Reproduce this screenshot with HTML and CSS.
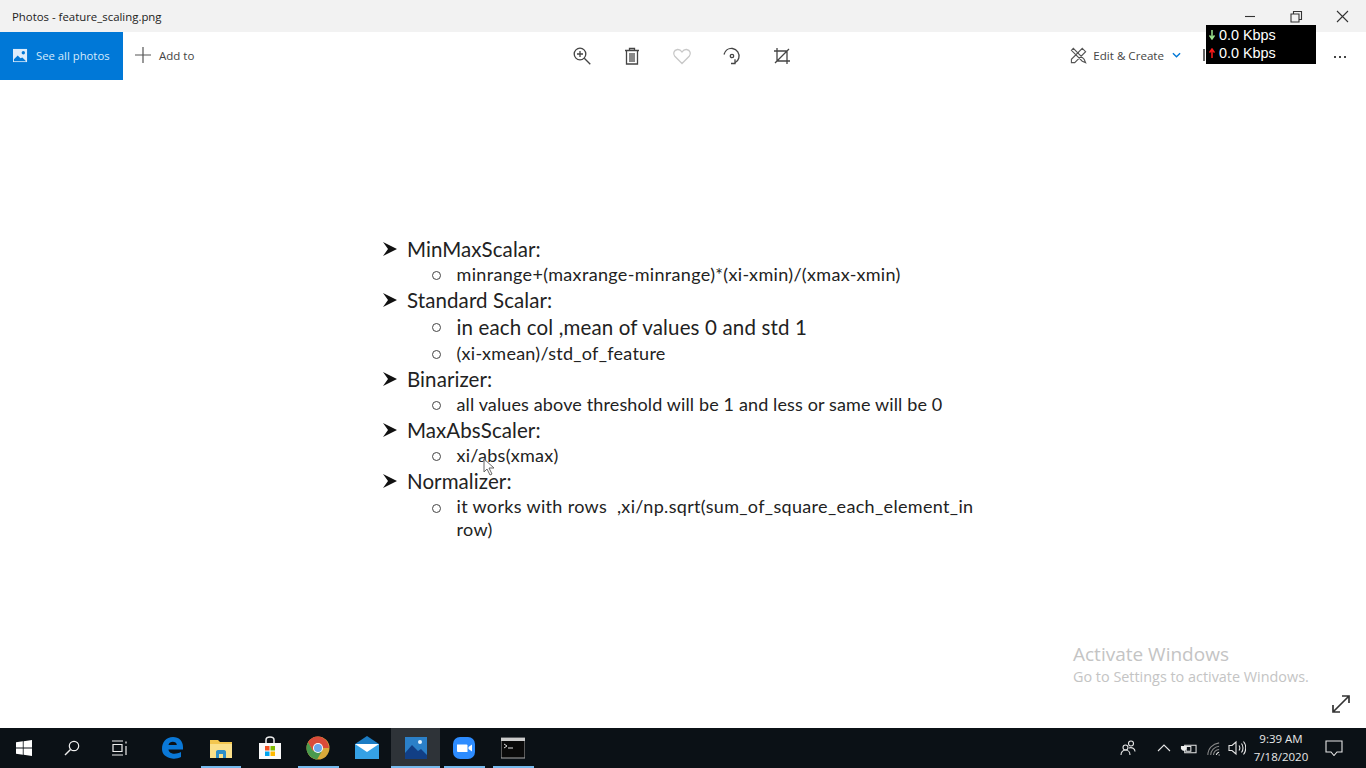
FILE: index.html
```html
<!DOCTYPE html>
<html lang="en">
<head>
<meta charset="utf-8">
<title>Photos - feature_scaling.png</title>
<link rel="stylesheet" href="styles.css">
</head>
<body>
<div class="screen">
  <header class="titlebar">
    <span class="title">Photos - feature_scaling.png</span>
    <div class="winctl">
      <svg class="wbtn" viewBox="0 0 46 32"><path d="M18 16.5h10" class="s1"/></svg>
      <svg class="wbtn" viewBox="0 0 46 32"><path d="M18 14h8v8h-8zM20.500 14v-2.500h8v8H26" class="s1"/></svg>
      <svg class="wbtn" viewBox="0 0 46 32"><path d="M18 11l11 11M29 11L18 22" class="s1"/></svg>
    </div>
  </header>

  <nav class="toolbar">
    <div class="seeall">
      <svg class="seeall-ico" viewBox="0 0 16 16"><path d="M0 1h15v14H0z" fill="#dcecfb"/><path d="M1 12l4-4 3 3 2-1 4 4H1z" fill="#0078d7"/><circle cx="11" cy="5" r="1.800" fill="#0078d7"/></svg>
      <span>See all photos</span>
    </div>
    <div class="addto">
      <svg class="plus" viewBox="0 0 16 16"><path d="M8 0v16M0 8h16" stroke="#555" stroke-width="1.200" fill="none"/></svg>
      <span>Add to</span>
    </div>
    <div class="tools">
      <svg class="tool" viewBox="0 0 20 20"><circle cx="8" cy="8" r="5.800" class="t"/><path d="M5 8h6M8 5v6" class="t"/><path d="M12.300 12.300l6 6" class="t"/></svg>
      <svg class="tool" viewBox="0 0 20 20"><path d="M3 4.500h14M7.500 4.500V2.500h5v2M4.500 4.500v13.500h11V4.500z" class="t"/><path d="M7 7h6v9H7z" fill="#888"/></svg>
      <svg class="tool" viewBox="0 0 20 20"><path d="M10 17.500L2.800 10.200C.8 8 1.500 4 5.500 3.500 7.500 3.300 9 4.500 10 6c1-1.500 2.500-2.700 4.500-2.500 4 .5 4.700 4.500 2.700 6.700z" fill="none" stroke="#c8c8c8" stroke-width="1.300"/></svg>
      <svg class="tool" viewBox="0 0 20 20"><path d="M2 8.500C3 4.500 6.500 2 10.500 2.500c4.500.6 7.500 5 6.300 9.500-.6 2.400-2 3.800-3.800 4.800" class="t"/><path d="M13 13.300v4.200H9" class="t"/><circle cx="10" cy="10" r="1.700" class="t"/></svg>
      <svg class="tool" viewBox="0 0 20 20"><path d="M5 2v13h13M2 5h13v13M3 17L17 3" class="t"/></svg>
    </div>
    <div class="edit">
      <svg class="edit-ico" viewBox="0 0 18 18"><path d="M1.500 3.500l2-2L15 13l1.500 3.500L13 15zM13 1.500l3.500 3.500L5 16.500H1.500V13z" fill="none" stroke="#555" stroke-width="1.200"/></svg>
      <span>Edit &amp; Create</span>
      <svg class="chev" viewBox="0 0 10 6"><path d="M1 1l4 4 4-4" fill="none" stroke="#0078d7" stroke-width="1.500"/></svg>
      <span class="clipped"></span>
    </div>
    <div class="more"><i></i><i></i><i></i></div>
  </nav>

  <main class="doc">
    <ul class="notes">
      <li class="row h1"><svg class="arrow" viewBox="0 0 14 14"><path d="M0 0l14 7-14 7 5-7z" fill="#111"/></svg><span>MinMaxScalar:</span></li>
      <li class="row r25"><span class="dot"></span><span>minrange+(maxrange-minrange)*(xi-xmin)/(xmax-xmin)</span></li>
      <li class="row h2"><svg class="arrow" viewBox="0 0 14 14"><path d="M0 0l14 7-14 7 5-7z" fill="#111"/></svg><span>Standard Scalar:</span></li>
      <li class="row big"><span class="dot"></span><span>in each col ,mean of values 0 and std 1</span></li>
      <li class="row r26"><span class="dot"></span><span>(xi-xmean)/std_of_feature</span></li>
      <li class="row h1"><svg class="arrow" viewBox="0 0 14 14"><path d="M0 0l14 7-14 7 5-7z" fill="#111"/></svg><span>Binarizer:</span></li>
      <li class="row r26 tight"><span class="dot"></span><span>all values above threshold will be 1 and less or same will be 0</span></li>
      <li class="row h1"><svg class="arrow" viewBox="0 0 14 14"><path d="M0 0l14 7-14 7 5-7z" fill="#111"/></svg><span>MaxAbsScaler:</span></li>
      <li class="row r26"><span class="dot"></span><span>xi/abs(xmax)</span></li>
      <li class="row h1"><svg class="arrow" viewBox="0 0 14 14"><path d="M0 0l14 7-14 7 5-7z" fill="#111"/></svg><span>Normalizer:</span></li>
      <li class="row wrap"><span class="dot"></span><span class="wraptext">it works with rows &nbsp;,xi/np.sqrt(sum_of_square_each_element_in<br>row)</span></li>
    </ul>
  </main>

  <footer class="taskbar">
    <div class="sys">
      <div class="tb"><svg class="i16" viewBox="0 0 16 16"><path d="M0 2.300l6.800-1v6.300H0zM7.600 1.200L16 0v7.600H7.600zM0 8.400h6.800v6.300l-6.800-1zM7.600 8.400H16V16l-8.400-1.200z" fill="#fff"/></svg></div>
      <div class="tb"><svg class="i16" viewBox="0 0 16 16"><circle cx="10" cy="6" r="4.700" fill="none" stroke="#eee" stroke-width="1.200"/><path d="M6.500 9.500L1 15" stroke="#eee" stroke-width="1.400"/></svg></div>
      <div class="tb"><svg class="i16" viewBox="0 0 16 16"><path d="M0 1h11M0 15h11M1 4.500h9v7H1zM14 1.500v2M14 6v9" fill="none" stroke="#eee" stroke-width="1.200"/></svg></div>
    </div>
    <div class="apps">
      <div class="tb app"><svg class="i24" viewBox="0 0 24 24"><path d="M2 13C2 6 6 1 13 1c6 0 10 4 10 10v2.500H8.500c.3 4.500 7 5.500 12.500 2.500v5c-3 1.500-6 2-9 1.500C5.500 21.500 2 18 2 13zm6.500-4h8.300c0-4-7.500-4.500-8.300 0z" fill="#0a78d7"/></svg></div>
      <div class="tb app on"><svg class="i24" viewBox="0 0 24 24"><path d="M1 4h8l2 2h12v16H1z" fill="#f3c64f"/><path d="M1 8h22v14H1z" fill="#fbe08a"/><path d="M7 22v-6c0-1 .5-2 2-2h6c1.500 0 2 1 2 2v6h-3v-4h-4v4z" fill="#2f8fc9"/></svg></div>
      <div class="tb app"><svg class="i24" viewBox="0 0 24 24"><path d="M1 7h22v16H1z" fill="#fafafa"/><path d="M8 7V4c0-4 8-4 8 0v3" fill="none" stroke="#eee" stroke-width="1.500"/><path d="M7 10h4.500v4.500H7z" fill="#f25022"/><path d="M12.500 10H17v4.500h-4.500z" fill="#7fba00"/><path d="M7 15.500h4.500V20H7z" fill="#00a4ef"/><path d="M12.500 15.500H17V20h-4.500z" fill="#ffb900"/></svg></div>
      <div class="tb app on"><svg class="i24" viewBox="0 0 24 24"><circle cx="12" cy="12" r="11.500" fill="#d9a93a"/><path d="M12 .5A11.500 11.500 0 0 0 2 6.300L7 15l5-3h10.800A11.500 11.500 0 0 0 12 .5z" fill="#d94b3a"/><path d="M2 6.300a11.500 11.500 0 0 0 9 17.100L16 15l-4-3-5 3z" fill="#4a9a4e"/><circle cx="12" cy="12" r="5" fill="#fff"/><circle cx="12" cy="12" r="4" fill="#6aa5ea"/></svg></div>
      <div class="tb app"><svg class="i26" viewBox="0 0 26 24"><path d="M1 8L13 0l12 8v15H1z" fill="#1b7cc4"/><path d="M1 8h24v15H1z" fill="#35a1e5"/><path d="M1 8h24l-12 8z" fill="#fff"/></svg></div>
      <div class="tb app on active"><svg class="i24" viewBox="0 0 24 24"><path d="M1 1h22v22H1z" fill="#2b80c8"/><path d="M1 23V17l7-8 6 6 3-2 6 6v4z" fill="#123f85"/><circle cx="16" cy="6" r="2" fill="#e6f3fd"/></svg></div>
      <div class="tb app on split"><svg class="i24" viewBox="0 0 24 24"><rect x="1" y="1" width="22" height="22" rx="7" fill="#2d8cff"/><path d="M5 8.500h9.500a1 1 0 0 1 1 1V16H6a1 1 0 0 1-1-1z" fill="#fff"/><path d="M16.500 11l3.500-2.500v7L16.500 13z" fill="#fff"/></svg></div>
      <div class="tb app on"><svg class="i24" viewBox="0 0 24 24"><path d="M0 2h24v20H0z" fill="#0a0a0a" stroke="#aaa"/><path d="M0 2h24v3H0z" fill="#ccc"/><path d="M3 8l3 2-3 2M7 12h5" stroke="#ddd" fill="none"/></svg></div>
    </div>
    <div class="tray">
      <svg class="ti people" viewBox="0 0 16 16"><circle cx="11" cy="3.500" r="2.500" class="w"/><circle cx="5.500" cy="7.500" r="2.500" class="w"/><path d="M1 15c0-3 2-5 4.500-5s4.500 2 4.500 5M9 8c3-1 6 .5 6 3.500" class="w"/></svg>
      <svg class="ti chevup" viewBox="0 0 14 8"><path d="M1 7l6-6 6 6" class="w"/></svg>
      <svg class="ti batt" viewBox="0 0 18 14"><path d="M5 4h12v8H5zM6.500 5.500h5v5h-5z" class="w"/><path d="M3 1v4M6 1v4M1 5h6v3l-2 2H3L1 8z" fill="#eee"/></svg>
      <svg class="ti wifi" viewBox="0 0 16 16"><path d="M2 15C2 8 7 3 14 2" class="dim"/><path d="M5 15C5 10 9 6 14 5.500" class="dim"/><path d="M8 15c0-3 2.500-6 6-6" class="dim"/><path d="M11 15c0-1 1.500-3 3-3" class="w"/><path d="M14 15.500v-1" class="w"/></svg>
      <svg class="ti vol" viewBox="0 0 18 16"><path d="M1 5.500h3L8 2v12l-4-3.500H1z" class="w"/><path d="M11 5.500c1 1.500 1 3.500 0 5M13.500 3.500c2 2.500 2 6.500 0 9M15.500 1.500c3 3.500 3 9.500 0 13" class="w"/></svg>
      <div class="clock"><span>9:39 AM</span><span>7/18/2020</span></div>
      <svg class="ti notif" viewBox="0 0 18 16"><path d="M1 1h16v11h-5l-3 3.500L6 12H1z" class="w"/></svg>
    </div>
  </footer>

  <!-- overlays -->
  <aside class="net">
    <div class="net-row"><svg class="net-arrow" viewBox="0 0 6 10"><path d="M3 0v8M.5 5.500L3 9l2.500-3.500" fill="none" stroke="#9be58e" stroke-width="1.500"/></svg><span>0.0 Kbps</span></div>
    <div class="net-row"><svg class="net-arrow" viewBox="0 0 6 10"><path d="M3 10V2M.5 4.500L3 1l2.500 3.500" fill="none" stroke="#ff1a1a" stroke-width="1.500"/></svg><span>0.0 Kbps</span></div>
  </aside>
  <div class="watermark"><div class="wm1">Activate Windows</div><div class="wm2">Go to Settings to activate Windows.</div></div>
  <svg class="expand" viewBox="0 0 20 20"><path d="M2 18L18 2M11 2h7v7M2 11v7h7" fill="none" stroke="#333" stroke-width="1.700"/></svg>
  <svg class="cursor" viewBox="0 0 13 18"><path d="M1 1v13l3-3 3 6 2-1-3-6h5z" fill="#fff" fill-opacity=".8" stroke="#666"/></svg>
</div>
</body>
</html>
```

FILE: styles.css
```css
* { box-sizing: border-box; }
html, body { margin: 0; padding: 0; }
body { font-family: "Open Sans", "Noto Sans", sans-serif; background: #fff; overflow: hidden; }
.screen { position: relative; width: 1366px; height: 768px; display: flex; flex-direction: column; overflow: hidden; }

.titlebar { height: 32px; flex: none; background: #f2f2f2; display: flex; align-items: center; padding-left: 12px; }
.title { font-size: 11.4px; color: #222; }
.winctl { margin-left: auto; display: flex; margin-right: 1px; }
.wbtn { width: 46px; height: 32px; }
.s1 { fill: none; stroke: #333; stroke-width: 1.100; }

.toolbar { height: 48px; flex: none; display: flex; align-items: center; background: #fff; position: relative; }
.seeall { width: 123px; height: 48px; background: #0078d7; color: #d6eafb; display: flex; align-items: center; padding: 0 0 2px 13px; gap: 8px; font-size: 11.3px; white-space: nowrap; }
.seeall-ico { width: 15px; height: 15px; flex: none; }
.addto { display: flex; align-items: center; gap: 8px; margin-left: 12px; font-size: 11.5px; color: #444; padding-bottom: 2px; }
.plus { width: 16px; height: 16px; }
.tools { position: absolute; left: 572px; top: 14px; display: flex; gap: 30px; }
.tool { width: 20px; height: 20px; }
.t { fill: none; stroke: #444; stroke-width: 1.300; }
.edit { margin-left: auto; display: flex; align-items: center; font-size: 11.6px; color: #444; padding-bottom: 2px; }
.edit-ico { width: 17px; height: 17px; margin-right: 6px; }
.chev { width: 9px; height: 6px; margin-left: 8px; }
.clipped { width: 2px; height: 12px; background: #666; margin-left: 22px; }
.more { display: flex; gap: 3px; margin: 2px 20px 0 129px; }
.more i { width: 2px; height: 2px; background: #444; }

.doc { flex: 1; padding: 156px 0 0 383px; background: #fff; }
.notes { list-style: none; margin: 0; padding: 0; color: #222; width: 620px; font-family: Lato, "Open Sans", sans-serif; }
.row { display: flex; align-items: center; white-space: nowrap; font-size: 18px; letter-spacing: .27px; }
.tight { letter-spacing: .13px; }
.arrow { width: 14px; height: 14px; flex: none; margin-right: 10px; }
.dot { width: 9px; height: 9px; flex: none; margin: 2px 15.500px 0 49px; border: 1.500px solid #444; border-radius: 50%; }
.h1 { height: 25px; font-size: 20.5px; letter-spacing: .08px; }
.h2 { height: 26px; font-size: 20.5px; letter-spacing: .1px; }
.r25 { height: 26px; letter-spacing: .33px; }
.r26 { height: 26px; }
.big { height: 27px; font-size: 20.5px; letter-spacing: .15px; }
.wrap { height: 48px; align-items: flex-start; padding-top: 2px; letter-spacing: .33px; }
.wrap .dot { margin-top: 9px; }
.wraptext { line-height: 23px; }

.taskbar { height: 40px; flex: none; background: #0b1116; display: flex; align-items: stretch; color: #eee; }
.sys { display: flex; }
.tb { width: 48px; height: 40px; display: flex; align-items: center; justify-content: center; position: relative; }
.apps { display: flex; margin-left: 4px; }
.app { width: 48.700px; }
.app.on::after { content: ""; position: absolute; left: 4px; right: 4px; bottom: 0; height: 2px; background: #76b9ed; }
.app.active { background: #2e3338; }
.app.active::after { left: 0; right: 0; }
.i16 { width: 16px; height: 16px; }
.i24 { width: 24px; height: 24px; }
.i26 { width: 26px; height: 24px; }

.tray { margin-left: auto; display: flex; align-items: center; position: relative; width: 246px; }
.ti { flex: none; }
.w { fill: none; stroke: #e6e6e6; stroke-width: 1.100; }
.dim { fill: none; stroke: #8a8a8a; stroke-width: 1.100; }
.people { width: 16px; height: 16px; margin-left: 0; }
.chevup { width: 14px; height: 8px; margin-left: 21px; }
.batt { width: 17px; height: 14px; margin-left: 9px; }
.wifi { width: 15px; height: 15px; margin-left: 9px; }
.vol { width: 18px; height: 16px; margin-left: 7px; }
.clock { width: 70px; margin-left: 0; display: flex; flex-direction: column; align-items: center; font-size: 11.500px; line-height: 18px; color: #e8e8e8; white-space: nowrap; }
.notif { width: 18px; height: 16px; margin-left: 9px; }

.net { position: absolute; left: 1206px; top: 25px; width: 110px; height: 39px; background: #000; color: #fff; font-family: "Liberation Sans", sans-serif; font-size: 14.4px; padding: 1px 0 0 3px; }
.net-row { display: flex; align-items: center; height: 18px; gap: 4px; }
.net-arrow { width: 6px; height: 10px; }
.watermark { position: absolute; left: 1073px; top: 642px; color: #c4c4c4; white-space: nowrap; }
.wm1 { font-size: 19px; line-height: 25px; }
.wm2 { font-size: 14.400px; line-height: 20px; }
.expand { position: absolute; left: 1331px; top: 694px; width: 20px; height: 20px; }
.cursor { position: absolute; left: 483px; top: 458px; width: 13px; height: 18px; }
```
